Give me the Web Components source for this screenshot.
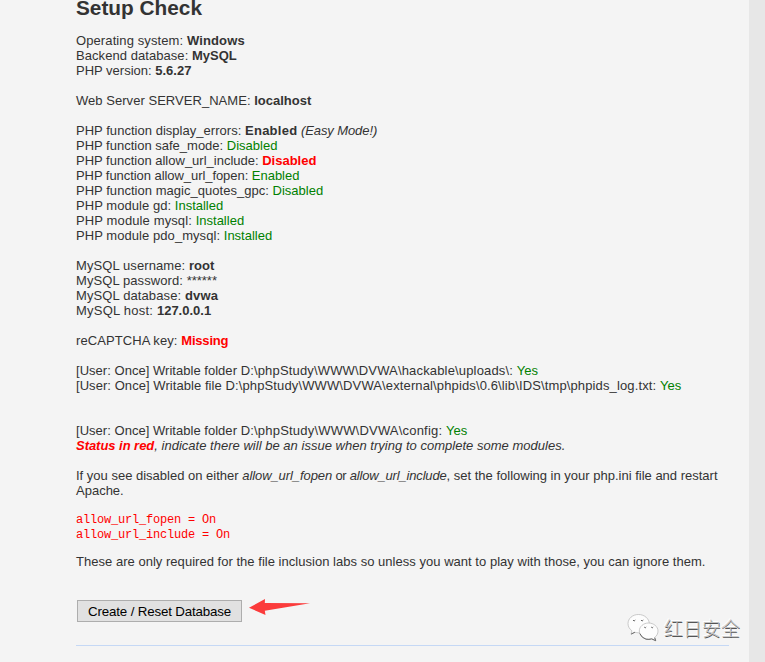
<!DOCTYPE html>
<html lang="en">
<head>
<meta charset="utf-8">
<title>Setup Check</title>
<style>
html,body{margin:0;height:662px;overflow:hidden;background:#e7e7e7}
</style>
</head>
<body>
<setup-page></setup-page>
<script>
class SetupRow extends HTMLElement{
  connectedCallback(){
    this.attachShadow({mode:'open'}).innerHTML=`<style>
    :host{display:block;height:15px;line-height:15px;white-space:nowrap}
    </style><slot></slot>`;
  }
}
customElements.define('setup-row',SetupRow);

class SetupGroup extends HTMLElement{
  connectedCallback(){
    this.attachShadow({mode:'open'}).innerHTML=`<style>:host{display:flex;flex-direction:column;margin-bottom:15px}</style><slot></slot>`;
  }
}
customElements.define('setup-group',SetupGroup);

/* A run of text with its own tracking, given in hundredths of a pixel. */
class TextRun extends HTMLElement{
  connectedCallback(){
    const t=(Number(this.getAttribute('track'))||0)/100;
    this.attachShadow({mode:'open'}).innerHTML=`<style>:host{display:inline;letter-spacing:${t}px}</style><slot></slot>`;
  }
}
customElements.define('text-run',TextRun);

class IniCode extends HTMLElement{
  connectedCallback(){
    this.attachShadow({mode:'open'}).innerHTML=`<style>:host{display:block;color:#f00;font:12px/15px "Liberation Mono",monospace;letter-spacing:-.2px;white-space:pre}</style><slot></slot>`;
  }
}
customElements.define('ini-code',IniCode);

class ResetButton extends HTMLElement{
  connectedCallback(){
    this.attachShadow({mode:'open'}).innerHTML=`<style>:host{display:block}
    button{box-sizing:border-box;display:block;width:165px;height:22px;padding:1px 0 0;border:1px solid #adadad;border-radius:0;background:#e1e1e1;color:#000;font:13.333px/19px "Liberation Sans",Arial,sans-serif;letter-spacing:-.17px;white-space:nowrap}</style>
    <button><slot></slot></button>`;
  }
}
customElements.define('reset-button',ResetButton);

class PointerArrow extends HTMLElement{
  connectedCallback(){
    this.attachShadow({mode:'open'}).innerHTML=`<style>:host{display:block}svg{display:block;overflow:visible}</style>
    <svg width="62" height="18" viewBox="0 0 62 18"><path d="M0 7.800 16-1 15.800 3 61 3.200 15.800 10.800 16.500 15Z" fill="#fb3b3b"/></svg>`;
  }
}
customElements.define('pointer-arrow',PointerArrow);

class AccountMark extends HTMLElement{
  connectedCallback(){
    this.attachShadow({mode:'open'}).innerHTML=`<style>
    :host{position:absolute;left:627px;top:612px;display:flex;align-items:center;gap:5px}
    svg{display:block}
    span{font:300 19px/28px "Noto Sans CJK SC",sans-serif;color:#c4c4c4;text-shadow:.6px .8px 0 #555,-1px -1px 0 #fff;white-space:nowrap;margin-top:1px}
    </style>
    <svg width="32" height="30" viewBox="0 0 32 30">
      <g fill="#fdfdfd" stroke="#b5b5b5" stroke-width=".7">
      <path d="M11.500 2.500C5.500 2.500 1 6.500 1 11.600c0 3 1.500 5.400 3.900 7.200L4 22.300l4-2c1.200.3 2.300.5 3.500.5 6 0 10.800-4 10.800-9S17.500 2.500 11.500 2.500Z"/>
      <path d="M21.500 11c-5 0-9.200 3.500-9.200 8s4.200 8.200 9.200 8.200c1.100 0 2.200-.2 3.200-.5l4 2-1-3.200c2.100-1.600 3.300-3.900 3.300-6.500 0-4.500-4.500-8-9.500-8Z"/></g>
      <path d="M6 8q1 2.200 2.300 0M14 8q1 2.200 2.300 0M17.200 15q1 1.800 2 0M24.200 15q1 1.800 2 0M4.200 22l3.700-1.800M12.800 21.500q2 4.500 6.200 5.700 3 .5 5.700-.3l4 1.800-1-3" fill="none" stroke="#666" stroke-width="1"/>
    </svg><span>红日安全</span>`;
  }
}
customElements.define('account-mark',AccountMark);

class SetupPage extends HTMLElement{
  connectedCallback(){
    this.attachShadow({mode:'open'}).innerHTML=`<style>
    :host{display:block;position:relative;box-sizing:border-box;width:749px;height:662px;padding-left:76px;background:#f4f4f4;color:#333;font:13px/15px "Liberation Sans",Arial,sans-serif}
    h1{margin:0 0 13px;height:20px;line-height:16px;font-size:20.800px}
    p{margin:0}
    .intro{white-space:nowrap}
    ini-code{margin:15px 0 11px}
    .ok{color:#008000}.bad{color:#f00;font-weight:bold}
    .action{display:flex;gap:7px;padding:31px 0 0 1px}
    hr{margin:23px 0 0;width:653px;height:1px;border:0;background:#c5d8f5}
    </style>
    <h1>Setup Check</h1>
    <setup-group>
      <setup-row><text-run track="10">Operating system: </text-run><b><text-run track="13">Windows</text-run></b></setup-row>
      <setup-row><text-run track="6">Backend database: </text-run><b>MySQL</b></setup-row>
      <setup-row>PHP version: <b>5.6.27</b></setup-row>
    </setup-group>
    <setup-group><setup-row><text-run track="4">Web Server SERVER_NAME: </text-run><b>localhost</b></setup-row></setup-group>
    <setup-group>
      <setup-row><text-run track="3">PHP function display_errors: </text-run><b><text-run track="26">Enabled</text-run></b><text-run track="-9"> <i>(Easy Mode!)</i></text-run></setup-row>
      <setup-row>PHP function safe_mode: <span class="ok">Disabled</span></setup-row>
      <setup-row>PHP function allow_url_include: <span class="bad">Disabled</span></setup-row>
      <setup-row><text-run track="-6">PHP function allow_url_fopen: </text-run><span class="ok">Enabled</span></setup-row>
      <setup-row><text-run track="3">PHP function magic_quotes_gpc: </text-run><span class="ok">Disabled</span></setup-row>
      <setup-row><text-run track="5">PHP module gd: </text-run><span class="ok">Installed</span></setup-row>
      <setup-row><text-run track="12">PHP module mysql: </text-run><span class="ok">Installed</span></setup-row>
      <setup-row><text-run track="6">PHP module pdo_mysql: </text-run><span class="ok">Installed</span></setup-row>
    </setup-group>
    <setup-group>
      <setup-row><text-run track="9">MySQL username: </text-run><b>root</b></setup-row>
      <setup-row><text-run track="8">MySQL password: </text-run>******</setup-row>
      <setup-row><text-run track="11">MySQL database: </text-run><b><text-run track="20">dvwa</text-run></b></setup-row>
      <setup-row><text-run track="22">MySQL host: </text-run><b>127.0.0.1</b></setup-row>
    </setup-group>
    <setup-group><setup-row><text-run track="8">reCAPTCHA key: </text-run><span class="bad"><text-run track="-18">Missing</text-run></span></setup-row></setup-group>
    <setup-group>
      <setup-row><text-run track="3">[User: Once] Writable folder </text-run><text-run track="16">D:\\phpStudy\\WWW\\DVWA\\hackable\\uploads\\: </text-run><span class="ok">Yes</span></setup-row>
      <setup-row><text-run track="6">[User: Once] Writable file </text-run><text-run track="12.600">D:\\phpStudy\\WWW\\DVWA\\external\\phpids\\0.6\\lib\\IDS\\tmp\\phpids_log.txt: </text-run><span class="ok">Yes</span></setup-row>
      <setup-row></setup-row>
      <setup-row></setup-row>
      <setup-row><text-run track="3">[User: Once] Writable folder </text-run><text-run track="20">D:\\phpStudy\\WWW\\DVWA\\config: </text-run><span class="ok">Yes</span></setup-row>
      <setup-row><i><span class="bad"><text-run track="-4">Status in red</text-run></span><text-run track="2">, indicate there will be an issue when trying to complete some modules.</text-run></i></setup-row>
    </setup-group>
    <p class="intro">If you see disabled on either <i><text-run track="-8">allow_url_fopen</text-run></i><text-run track="-30"> or </text-run><i><text-run track="-17">allow_url_include</text-run></i>, set the following in your php.ini file and restart<br>Apache.</p>
    <ini-code>allow_url_fopen = On
allow_url_include = On</ini-code>
    <p><text-run track="2.700">These are only required for the file inclusion labs so unless you want to play with those, you can ignore them.</text-run></p>
    <div class="action"><reset-button>Create / Reset Database</reset-button><pointer-arrow></pointer-arrow></div>
    <hr>
    <account-mark></account-mark>`;
  }
}
customElements.define('setup-page',SetupPage);
</script>
</body>
</html>
